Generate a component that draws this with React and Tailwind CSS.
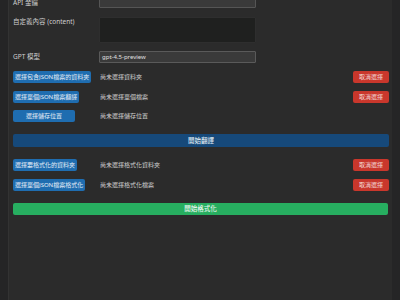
import React from 'react';

const rows1 = [
  { btn: '選擇包含JSON檔案的資料夾', status: '尚未選擇資料夾', cancel: true },
  { btn: '選擇單個JSON檔案翻譯', status: '尚未選擇單個檔案', cancel: true },
  { btn: '選擇儲存位置', status: '尚未選擇儲存位置', cancel: false },
];

const rows2 = [
  { btn: '選擇要格式化的資料夾', status: '尚未選擇格式化資料夾', cancel: true },
  { btn: '選擇單個JSON檔案格式化', status: '尚未選擇格式化檔案', cancel: true },
];

function PickRow({ btn, status, cancel }) {
  return (
    <div className="flex items-center h-[12px] leading-none">
      <div className="w-[87px] shrink-0 flex">
        <button className="h-[12px] min-w-[62px] px-[2px] rounded-[2px] bg-[#1f6db0] text-[#e6eef7] text-[6px] leading-[12px] whitespace-nowrap">
          {btn}
        </button>
      </div>
      <span className="flex-1 text-[6px] text-[#d0d0d0] whitespace-nowrap">{status}</span>
      {cancel && (
        <button className="h-[12px] w-[36px] rounded-[2px] bg-[#c9372c] text-[#f3dcda] text-[6px] leading-[12px]">
          取消選擇
        </button>
      )}
    </div>
  );
}

export default function App() {
  return (
    <div
      className="w-[400px] h-[300px] overflow-hidden bg-[#252526] flex leading-none"
      style={{ fontFamily: '"Noto Sans", "Noto Sans CJK TC", sans-serif' }}
    >
      <div className="ml-[8px] w-[384px] h-full bg-[#2b2b2b] border-l border-[#333333] pl-[4px] pr-[3px]">
        <div className="-mt-[4px] flex flex-col">
          <div className="flex items-center h-[12px]">
            <span className="w-[86px] text-[6.5px] text-[#cfcfcf] mt-[2px]">API 金鑰</span>
            <div className="w-[157px] h-[12px] bg-[#3a3a3a] border border-[#555555] rounded-[1px]" />
          </div>
          <div className="flex items-start mt-[9px] h-[26px]">
            <span className="w-[86px] text-[6.5px] text-[#cfcfcf] leading-[9px]">自定義內容 (content)</span>
            <div className="w-[157px] h-[26px] bg-[#1f201f] border border-[#2e2e2e] rounded-[1px]" />
          </div>
          <div className="flex items-center mt-[8px] h-[12px]">
            <span className="w-[86px] text-[6.5px] text-[#cfcfcf]">GPT 模型</span>
            <div className="w-[157px] h-[12px] bg-[#3a3a3a] border border-[#5a5a5a] rounded-[1px] px-[2px] text-[6px] leading-[10px] text-[#e0e0e0]">
              gpt-4.5-preview
            </div>
          </div>

          <div className="mt-[8px] flex flex-col gap-[7.5px]">
            {rows1.map((r, i) => (
              <PickRow key={i} {...r} />
            ))}
          </div>

          <button className="mt-[12px] h-[13px] w-full rounded-[2px] bg-[#16497a] text-[#dfe7ef] text-[6.5px] leading-[13px] font-medium">
            開始翻譯
          </button>

          <div className="mt-[12px] flex flex-col gap-[8px]">
            {rows2.map((r, i) => (
              <PickRow key={i} {...r} />
            ))}
          </div>

          <button className="mt-[12px] h-[12px] w-[375px] rounded-[2px] bg-[#27ae60] text-[#e8f5ec] text-[6.5px] leading-[12px] font-medium">
            開始格式化
          </button>
        </div>
      </div>
    </div>
  );
}
